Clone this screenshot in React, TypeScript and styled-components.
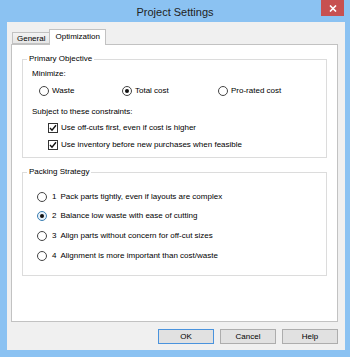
import styled, { createGlobalStyle } from "styled-components";

const Global = createGlobalStyle`
  html, body { margin: 0; padding: 0; }
  body {
    font-family: "Liberation Sans", Arial, sans-serif;
    font-size: 8px;
    color: #000;
  }
`;

const Window = styled.div`
  width: 350px;
  height: 357px;
  background: #8bc2f2;
  display: flex;
  flex-direction: column;
  box-sizing: border-box;
`;

const TitleBar = styled.div`
  height: 22px;
  display: grid;
  grid-template-columns: 1fr auto 1fr;
  align-items: start;
`;

const Title = styled.div`
  grid-column: 2;
  font-size: 11px;
  line-height: 22px;
  color: #222;
  padding-top: 1px;
`;

const CloseButton = styled.div`
  justify-self: end;
  margin-right: 6px;
  width: 23px;
  height: 16px;
  background: #c75050;
  display: flex;
  align-items: center;
  justify-content: center;
`;

const Client = styled.div`
  flex: 1;
  margin: 0 5px 7px 7px;
  background: #f0f0f0;
  display: flex;
  flex-direction: column;
  padding: 7px 7px 6px 4px;
`;

const TabStrip = styled.div`
  display: flex;
  align-items: flex-end;
  height: 15px;
  padding-left: 1px;
`;

const Tab = styled.div<{ $active?: boolean }>`
  box-sizing: border-box;
  height: ${(p) => (p.$active ? "16px" : "12px")};
  margin-bottom: ${(p) => (p.$active ? "-1px" : "0")};
  margin-left: ${(p) => (p.$active ? "-1px" : "0")};
  padding: 0 ${(p) => (p.$active ? "5px" : "4px")};
  border: 1px solid #c2c2c2;
  border-bottom: ${(p) => (p.$active ? "none" : "1px solid #c2c2c2")};
  background: ${(p) =>
    p.$active ? "#fff" : "linear-gradient(#f3f3f3, #e6e6e6)"};
  position: relative;
  z-index: ${(p) => (p.$active ? 1 : 0)};
  line-height: ${(p) => (p.$active ? "13px" : "11px")};
`;

const TabPage = styled.div`
  flex: 1;
  background: #fff;
  border: 1px solid #c2c2c2;
  padding: 14px 10px 0 10px;
  display: flex;
  flex-direction: column;
`;

const Group = styled.div<{ $mt?: number; $pb: number }>`
  border: 1px solid #dcdcdc;
  margin-top: ${(p) => p.$mt ?? 0}px;
  padding-bottom: ${(p) => p.$pb}px;
  display: flex;
  flex-direction: column;
  align-items: flex-start;
`;

const GroupTitle = styled.div`
  margin: -7px 0 0 4px;
  padding: 0 2px;
  height: 12px;
  line-height: 12px;
  background: #fff;
`;

const Label = styled.div<{ $mt: number; $ml: number }>`
  height: 12px;
  line-height: 12px;
  margin-top: ${(p) => p.$mt}px;
  margin-left: ${(p) => p.$ml}px;
`;

const RadioRow = styled.div<{ $mt: number }>`
  margin-top: ${(p) => p.$mt}px;
  margin-left: 16px;
  height: 12px;
  display: grid;
  grid-template-columns: 83px 96px auto;
  align-items: center;
`;

const Option = styled.div<{ $mt?: number; $ml?: number }>`
  display: flex;
  align-items: center;
  height: 12px;
  line-height: 12px;
  gap: 3px;
  margin-top: ${(p) => p.$mt ?? 0}px;
  margin-left: ${(p) => p.$ml ?? 0}px;
  white-space: nowrap;
`;

const Circle = styled.span<{ $on?: boolean; $focus?: boolean }>`
  box-sizing: border-box;
  width: 10px;
  height: 10px;
  border-radius: 50%;
  border: 1px solid ${(p) => (p.$focus ? "#3c7fb1" : "#444")};
  background: ${(p) => (p.$focus ? "#e6f1fb" : "#fff")};
  display: flex;
  align-items: center;
  justify-content: center;
  flex-shrink: 0;
  &::after {
    content: "";
    display: ${(p) => (p.$on ? "block" : "none")};
    width: 4px;
    height: 4px;
    border-radius: 50%;
    background: #111;
  }
`;

const Box = styled.span`
  box-sizing: border-box;
  width: 10px;
  height: 10px;
  border: 1px solid #333;
  background: #fff;
  display: flex;
  align-items: center;
  justify-content: center;
  flex-shrink: 0;
`;

const Num = styled.span`
  margin-left: 2px;
  margin-right: 1px;
`;

const ButtonBar = styled.div`
  display: flex;
  justify-content: flex-end;
  gap: 6px;
  margin-top: 7px;
`;

const Button = styled.div<{ $default?: boolean }>`
  box-sizing: border-box;
  width: 56px;
  height: 15px;
  border: 1px solid ${(p) => (p.$default ? "#4a93dd" : "#adadad")};
  background: #e1e1e1;
  display: flex;
  align-items: center;
  justify-content: center;
`;

const Check = () => (
  <Box>
    <svg width="8" height="8" viewBox="0 0 8 8">
      <path d="M1 4 L3 6.2 L7 1.2" fill="none" stroke="#111" strokeWidth="1.4" />
    </svg>
  </Box>
);

const strategies = [
  "Pack parts tightly, even if layouts are complex",
  "Balance low waste with ease of cutting",
  "Align parts without concern for off-cut sizes",
  "Alignment is more important than cost/waste",
];

export default function App() {
  return (
    <Window>
      <Global />
      <TitleBar>
        <Title>Project Settings</Title>
        <CloseButton>
          <svg width="8" height="7" viewBox="0 0 8 7">
            <path d="M1 0.5 L7 6.5 M7 0.5 L1 6.5" stroke="#fff" strokeWidth="1.6" />
          </svg>
        </CloseButton>
      </TitleBar>
      <Client>
        <TabStrip>
          <Tab>General</Tab>
          <Tab $active>Optimization</Tab>
        </TabStrip>
        <TabPage>
          <Group $pb={6}>
            <GroupTitle>Primary Objective</GroupTitle>
            <Label $mt={3} $ml={9}>Minimize:</Label>
            <RadioRow $mt={5}>
              <Option>
                <Circle />
                Waste
              </Option>
              <Option>
                <Circle $on />
                Total cost
              </Option>
              <Option>
                <Circle />
                Pro-rated cost
              </Option>
            </RadioRow>
            <Label $mt={9} $ml={9}>Subject to these constraints:</Label>
            <Option $mt={4} $ml={25}>
              <Check />
              Use off-cuts first, even if cost is higher
            </Option>
            <Option $mt={5} $ml={25}>
              <Check />
              Use inventory before new purchases when feasible
            </Option>
          </Group>
          <Group $mt={14} $pb={13}>
            <GroupTitle>Packing Strategy</GroupTitle>
            {strategies.map((s, i) => (
              <Option key={s} $mt={i === 0 ? 13 : i === 1 ? 7 : 8} $ml={14}>
                <Circle $on={i === 1} $focus={i === 1} />
                <Num>{i + 1}</Num>
                {s}
              </Option>
            ))}
          </Group>
        </TabPage>
        <ButtonBar>
          <Button $default>OK</Button>
          <Button>Cancel</Button>
          <Button>Help</Button>
        </ButtonBar>
      </Client>
    </Window>
  );
}
